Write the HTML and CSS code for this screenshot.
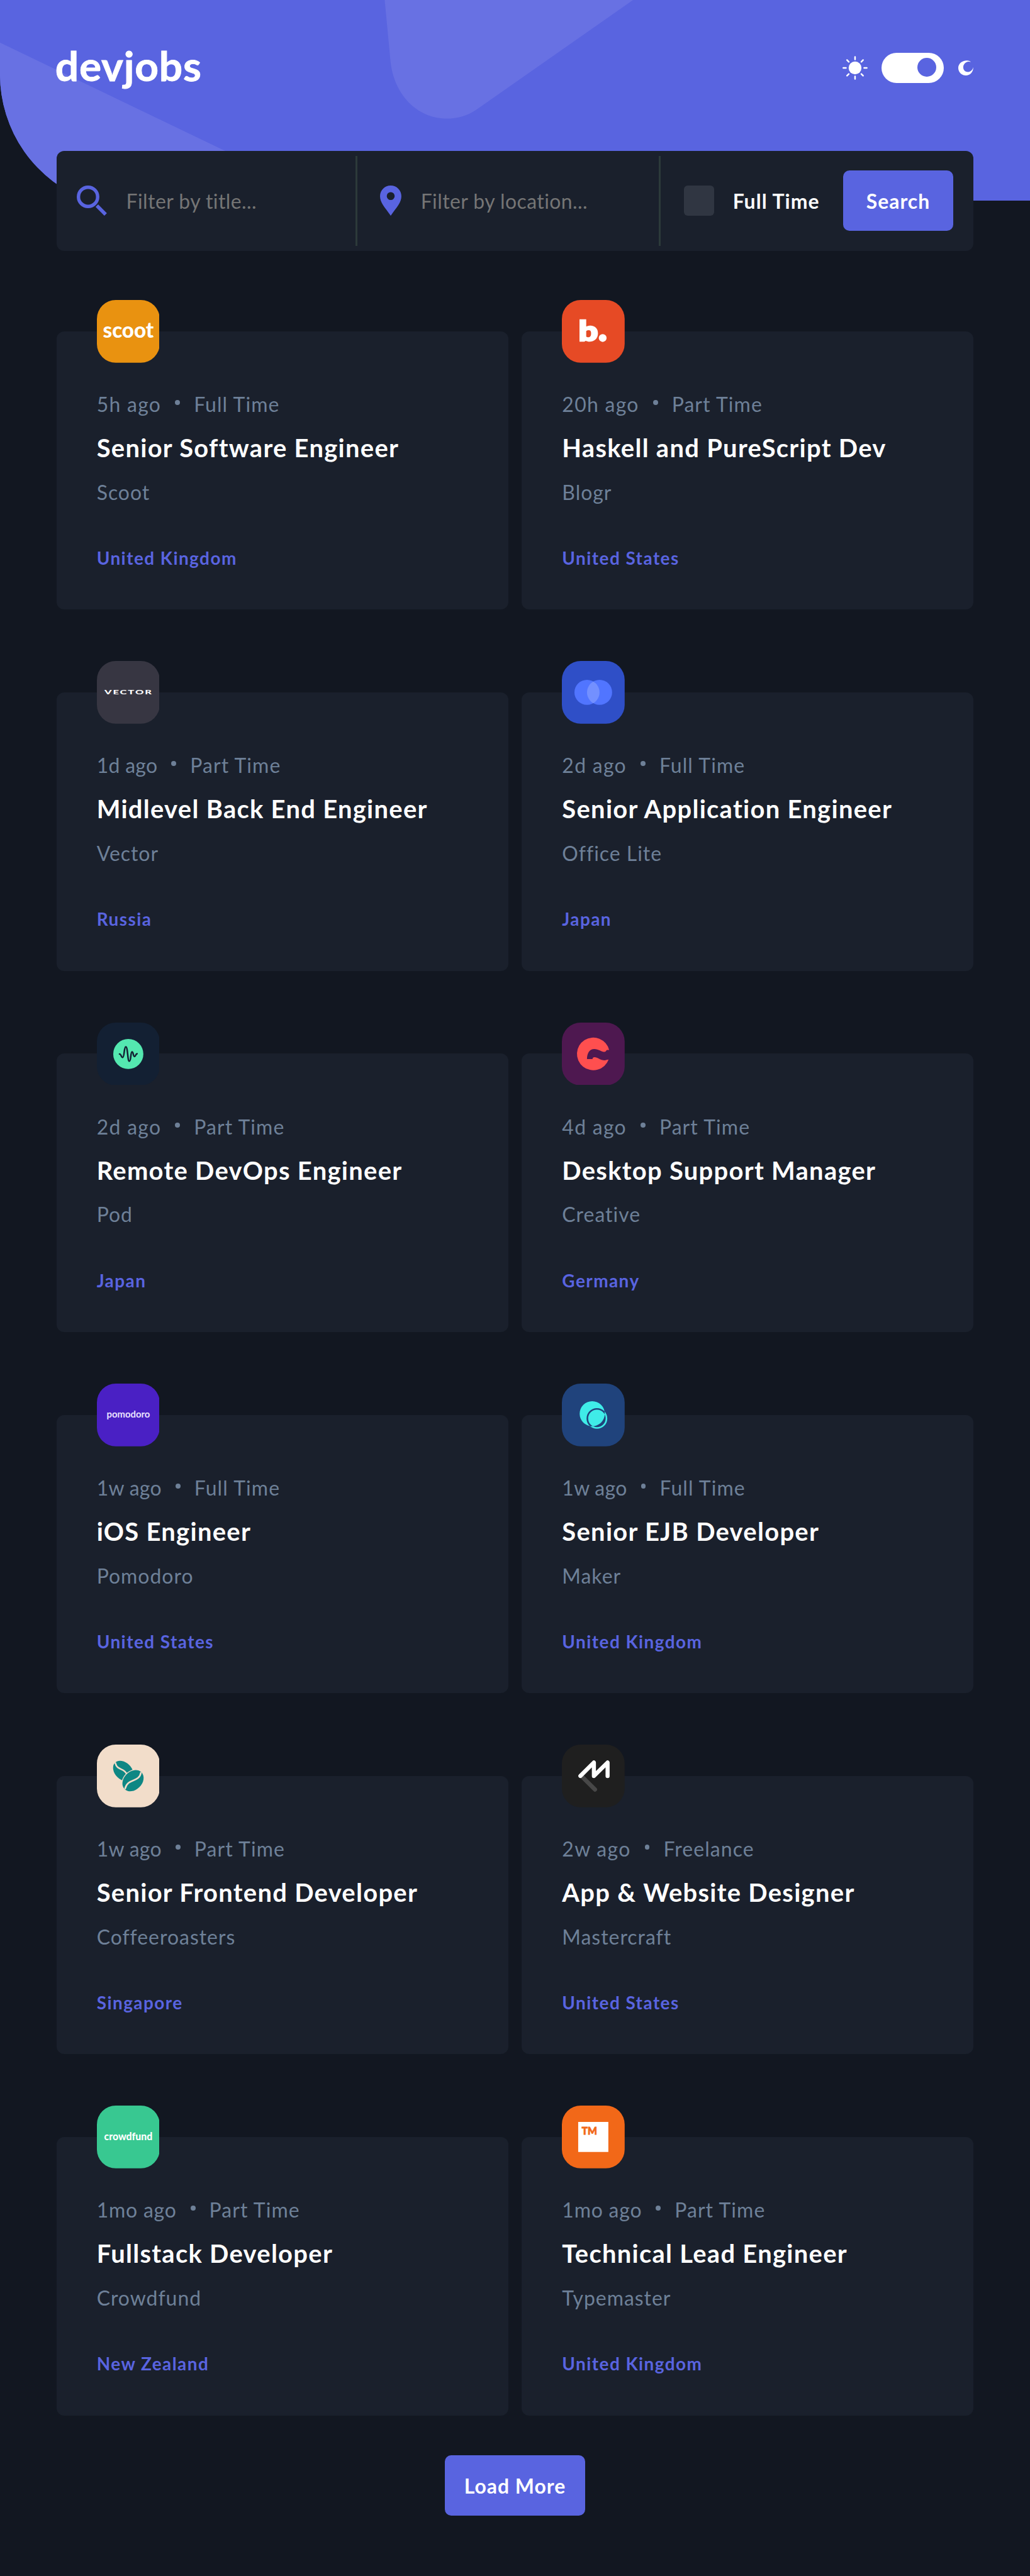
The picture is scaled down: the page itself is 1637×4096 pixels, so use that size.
FILE: index.html
```html
<!DOCTYPE html>
<html lang="en">
<head>
<meta charset="utf-8">
<title>devjobs</title>
<link rel="stylesheet" href="styles.css">
</head>
<body>
<div class="page">
  <header class="header">
    <svg class="header-bg" viewBox="0 0 1640 320" preserveAspectRatio="none" aria-hidden="true">
      <path fill="#5964e0" d="M0 0H1640V320H142A213.500 213.500 0 0 1 0 117.500Z"/>
      <path fill="#6871e3" d="M0 68L524 320H142A213.500 213.500 0 0 1 0 117.500Z"/>
      <path fill="#6871e3" d="M612.500 0L621.500 95C626 150 664 189 711 189C728 189 744 184.500 758 175L1008 0Z"/>
    </svg>
    <div class="topbar">
      <a class="brand">devjobs</a>
      <div class="theme">
        <svg class="sun" viewBox="0 0 40 40"><circle cx="20" cy="20" r="10.200" fill="#fff"/><path stroke="#fff" stroke-width="2.500" stroke-linecap="round" d="M20 2.500V6.500M20 33.500V37.500M1.300 20H5.500M34.500 20H38.700M7.200 7.500L10 10.300M30 29.700L32.800 32.500M32.800 7.500L30 10.300M10 29.700L7.200 32.500"/></svg>
        <span class="toggle"><span class="knob"></span></span>
        <svg class="moon" viewBox="0 0 24 24"><path fill="#fff" d="M13 .3C16 -.1 19 1.200 20.200 2.600C18 1.600 15 1.500 12.300 3.300C9 5.500 7.600 8.500 8 12C8.500 16 11.500 18.500 15.500 18.500C20 18.300 23 15 23.800 10.800C24.300 18 19 24 12 24C5.400 24 0 18.600 0 12C0 6 5 .8 13 .3Z"/></svg>
      </div>
    </div>
  </header>

  <form class="filters">
    <label class="field field-title">
      <svg class="icon-search" viewBox="0 0 48 48"><circle cx="18" cy="18" r="15.300" fill="none" stroke="#5964e0" stroke-width="5.400"/><path fill="#5964e0" d="M30 34L34 30L48 44L44 48Z"/></svg>
      <span class="placeholder">Filter by title...</span>
    </label>
    <label class="field field-location">
      <svg class="icon-pin" viewBox="0 0 34 48"><path fill="#5964e0" fill-rule="evenodd" d="M17 0C26.500 0 34 7.500 34 17C34 27 27 34 17 48C7 34 0 27 0 17C0 7.500 7.500 0 17 0ZM17 10.500A6.300 6.300 0 1 0 17 23.100A6.300 6.300 0 1 0 17 10.500Z"/></svg>
      <span class="placeholder">Filter by location...</span>
    </label>
    <div class="field-submit">
      <span class="checkbox"></span>
      <span class="check-label">Full Time</span>
      <button class="button button-search" type="button">Search</button>
    </div>
  </form>

  <main class="jobs">
    <article class="job">
      <svg class="job-logo" viewBox="0 0 100 100"><rect width="100" height="100" rx="30" fill="#e99210"/><text class="logo-text logo-scoot" x="9.500" y="60.500" textLength="81" lengthAdjust="spacingAndGlyphs">scoot</text></svg>
      <p class="meta"><span class="age">5h ago</span><i class="dot"></i><span>Full Time</span></p>
      <h2 class="title">Senior Software Engineer</h2>
      <p class="company">Scoot</p>
      <p class="location">United Kingdom</p>
    </article>
    <article class="job">
      <svg class="job-logo" viewBox="0 0 100 100"><rect width="100" height="100" rx="30" fill="#e64a25"/><text class="logo-text logo-blogr" x="26.500" y="65.500" textLength="31" lengthAdjust="spacingAndGlyphs">b</text><circle cx="65" cy="60.600" r="6.200" fill="#fff"/></svg>
      <p class="meta"><span class="age">20h ago</span><i class="dot"></i><span>Part Time</span></p>
      <h2 class="title">Haskell and PureScript Dev</h2>
      <p class="company">Blogr</p>
      <p class="location">United States</p>
    </article>
    <article class="job">
      <svg class="job-logo" viewBox="0 0 100 100"><rect width="100" height="100" rx="30" fill="#373642"/><text class="logo-text logo-vector" x="12" y="53" textLength="77" lengthAdjust="spacingAndGlyphs">VECTOR</text></svg>
      <p class="meta"><span class="age age-narrow">1d ago</span><i class="dot"></i><span>Part Time</span></p>
      <h2 class="title">Midlevel Back End Engineer</h2>
      <p class="company">Vector</p>
      <p class="location">Russia</p>
    </article>
    <article class="job">
      <svg class="job-logo" viewBox="0 0 100 100"><rect width="100" height="100" rx="30" fill="#2f4fc7"/><circle cx="40" cy="50" r="20" fill="#5175ff"/><circle cx="60" cy="50" r="20" fill="#5175ff"/><path fill="#7390ff" d="M50 32.700A20 20 0 0 1 50 67.300A20 20 0 0 1 50 32.700Z"/></svg>
      <p class="meta"><span class="age">2d ago</span><i class="dot"></i><span>Full Time</span></p>
      <h2 class="title">Senior Application Engineer</h2>
      <p class="company">Office Lite</p>
      <p class="location">Japan</p>
    </article>
    <article class="job">
      <svg class="job-logo" viewBox="0 0 100 100"><rect width="100" height="100" rx="30" fill="#132033"/><circle cx="50" cy="50" r="24" fill="#54e8b0"/><path fill="none" stroke="#132033" stroke-width="2.500" stroke-linecap="round" stroke-linejoin="round" d="M36 50C38.500 49.500 38.500 55.500 41 55.500C44 55.500 43 38.500 46 38.500C49.500 38.500 48.500 61.500 51.700 61.500C54.500 61.500 53.500 46.500 56 46.500C58.300 46.500 57.500 54 60 54C62 54 61.500 49.500 64 49.500"/></svg>
      <p class="meta"><span class="age">2d ago</span><i class="dot"></i><span>Part Time</span></p>
      <h2 class="title">Remote DevOps Engineer</h2>
      <p class="company">Pod</p>
      <p class="location">Japan</p>
    </article>
    <article class="job">
      <svg class="job-logo" viewBox="0 0 100 100"><rect width="100" height="100" rx="30" fill="#4e1850"/><path fill="#ff4f4f" d="M75.300 43.700H72C70.500 43.700 70.500 46.700 68 46.700C63.500 46.700 58 42 51.700 42C43.500 42 40 49.500 40 58.200H48.800C48.800 56 50 55 52 55C56.500 55 61.500 60 68 60C71 60 71.500 59 74.400 58.900A26 26 0 1 1 75.300 43.700Z"/></svg>
      <p class="meta"><span class="age">4d ago</span><i class="dot"></i><span>Part Time</span></p>
      <h2 class="title">Desktop Support Manager</h2>
      <p class="company">Creative</p>
      <p class="location">Germany</p>
    </article>
    <article class="job">
      <svg class="job-logo" viewBox="0 0 100 100"><rect width="100" height="100" rx="30" fill="#4a20c4"/><text class="logo-text logo-pomodoro" x="15.500" y="53.700" textLength="69" lengthAdjust="spacingAndGlyphs">pomodoro</text></svg>
      <p class="meta"><span class="age age-narrow">1w ago</span><i class="dot"></i><span>Full Time</span></p>
      <h2 class="title">iOS Engineer</h2>
      <p class="company">Pomodoro</p>
      <p class="location">United States</p>
    </article>
    <article class="job">
      <svg class="job-logo" viewBox="0 0 100 100"><rect width="100" height="100" rx="30" fill="#20437c"/><path fill="#3fece8" fill-rule="evenodd" d="M48.300 28A20 20 0 1 0 48.300 68A20 20 0 1 0 48.300 28ZM55.800 39A16.500 16.500 0 1 0 55.800 72A16.500 16.500 0 1 0 55.800 39ZM55.800 41.600A13.900 13.900 0 1 1 55.800 69.400A13.900 13.900 0 1 1 55.800 41.600Z"/></svg>
      <p class="meta"><span class="age age-narrow">1w ago</span><i class="dot"></i><span>Full Time</span></p>
      <h2 class="title">Senior EJB Developer</h2>
      <p class="company">Maker</p>
      <p class="location">United Kingdom</p>
    </article>
    <article class="job">
      <svg class="job-logo" viewBox="0 0 100 100"><rect width="100" height="100" rx="30" fill="#f2ddca"/><ellipse cx="42" cy="42" rx="18.500" ry="13.500" transform="rotate(45 42 42)" fill="#0e8784"/><path fill="none" stroke="#f2ddca" stroke-width="2.600" stroke-linecap="round" d="M29.500 29.500C32 41 42 37 47 46"/><ellipse cx="57.500" cy="57.500" rx="19" ry="14.500" transform="rotate(-45 57.500 57.500)" fill="#0e8784" stroke="#f2ddca" stroke-width="2.600" paint-order="stroke"/><path fill="none" stroke="#f2ddca" stroke-width="2.600" stroke-linecap="round" d="M70 45C67 61 49 53 45 70"/></svg>
      <p class="meta"><span class="age age-narrow">1w ago</span><i class="dot"></i><span>Part Time</span></p>
      <h2 class="title">Senior Frontend Developer</h2>
      <p class="company">Coffeeroasters</p>
      <p class="location">Singapore</p>
    </article>
    <article class="job">
      <svg class="job-logo" viewBox="0 0 100 100"><rect width="100" height="100" rx="30" fill="#1f1f1f"/><path stroke="#474747" stroke-width="6.800" stroke-linecap="round" d="M31 50L52.700 71.500"/><path fill="none" stroke="#fff" stroke-width="6.500" stroke-linecap="round" stroke-linejoin="round" d="M29.500 50L51 28.500V50L72.800 28.500V50"/></svg>
      <p class="meta"><span class="age">2w ago</span><i class="dot"></i><span>Freelance</span></p>
      <h2 class="title">App &amp; Website Designer</h2>
      <p class="company">Mastercraft</p>
      <p class="location">United States</p>
    </article>
    <article class="job">
      <svg class="job-logo" viewBox="0 0 100 100"><rect width="100" height="100" rx="30" fill="#38c891"/><text class="logo-text logo-crowdfund" x="11.500" y="55.300" textLength="77" lengthAdjust="spacingAndGlyphs">crowdfund</text></svg>
      <p class="meta"><span class="age age-month">1mo ago</span><i class="dot"></i><span>Part Time</span></p>
      <h2 class="title">Fullstack Developer</h2>
      <p class="company">Crowdfund</p>
      <p class="location">New Zealand</p>
    </article>
    <article class="job">
      <svg class="job-logo" viewBox="0 0 100 100"><rect width="100" height="100" rx="30" fill="#f26818"/><path fill="#fff" d="M26 26H74V74H26Z"/><text class="logo-text logo-typemaster" x="31.500" y="46" textLength="24.500" lengthAdjust="spacingAndGlyphs">TM</text></svg>
      <p class="meta"><span class="age age-month">1mo ago</span><i class="dot"></i><span>Part Time</span></p>
      <h2 class="title">Technical Lead Engineer</h2>
      <p class="company">Typemaster</p>
      <p class="location">United Kingdom</p>
    </article>
  </main>

  <div class="more">
    <button class="button button-more" type="button">Load More</button>
  </div>
</div>
</body>
</html>
```
FILE: styles.css
```css
* { box-sizing: border-box; }

html, body {
  margin: 0;
  height: 4096px;
  overflow: hidden;
  background: #121721;
}

.page {
  zoom: 0.998;
  width: 1640.3px;
  height: 4104px;
  color: #fff;
  font-family: Lato, "Liberation Sans", sans-serif;
  font-size: 32px;
}

.header {
  position: relative;
  height: 240px;
}

.header-bg {
  position: absolute;
  top: 0;
  left: 0;
  width: 100%;
  height: 320px;
}

.topbar {
  position: relative;
  display: flex;
  justify-content: space-between;
  align-items: flex-start;
  padding: 64px 90px 0;
}

.brand {
  margin-left: -2px;
  font-size: 66px;
  font-weight: 700;
  line-height: 80px;
  letter-spacing: 0.8px;
  -webkit-text-stroke: 0.8px #fff;
}

.theme {
  display: flex;
  align-items: center;
  height: 48px;
  margin-top: 20px;
}

.sun { width: 40px; height: 40px; }

.toggle {
  display: flex;
  align-items: center;
  justify-content: flex-end;
  width: 100px;
  height: 48px;
  margin: 0 23px 0 22px;
  padding: 0 12px 2px 0;
  border-radius: 24px;
  background: #fff;
}

.knob {
  width: 30px;
  height: 30px;
  border-radius: 50%;
  background: #5964e0;
}

.moon { width: 24px; height: 24px; }

.filters {
  position: relative;
  display: flex;
  align-items: center;
  height: 160px;
  margin: 0 90px;
  border-radius: 12px;
  background: #1a202c;
}

.field {
  display: flex;
  align-items: center;
  height: 144px;
  border-right: 4px solid #2c3a3a;
}

.field-title {
  width: 479px;
  padding-left: 32px;
  gap: 31px;
}

.field-location {
  width: 483px;
  padding-left: 36px;
  gap: 31px;
}

.icon-search { width: 48px; height: 48px; }
.icon-pin { width: 34px; height: 48px; }

.placeholder {
  padding-top: 2px;
  color: #757575;
  line-height: 40px;
  letter-spacing: 0.45px;
  white-space: nowrap;
}

.field-submit {
  flex: 1;
  display: flex;
  align-items: center;
  padding: 0 32px 0 37px;
}

.checkbox {
  width: 48px;
  height: 48px;
  border-radius: 6px;
  background: #303642;
}

.check-label {
  margin-left: 30px;
  padding-top: 1px;
  font-weight: 700;
  line-height: 40px;
  letter-spacing: 1.05px;
  white-space: nowrap;
}

.button {
  height: 96px;
  padding: 1px 0 0;
  border: 0;
  border-radius: 10px;
  background: #5964e0;
  color: #fff;
  font: 700 32px/40px Lato, "Liberation Sans", sans-serif;
  letter-spacing: 1px;
}

.button-search { width: 176px; margin-left: auto; }
.button-more { width: 224px; }

.jobs {
  display: grid;
  grid-template-columns: 1fr 1fr;
  grid-auto-rows: 443.4px;
  gap: 132px 22px;
  padding: 128px 90px 0;
}

.job {
  position: relative;
  padding: 96.5px 64px 0;
  border-radius: 12px;
  background: #1a202c;
}

.job-logo {
  position: absolute;
  top: -50px;
  left: 64px;
  width: 100px;
  height: 100px;
}

.meta, .title, .company, .location {
  margin: 0;
  white-space: nowrap;
}

.meta {
  display: flex;
  align-items: center;
  color: #6e8098;
  line-height: 40px;
  letter-spacing: 1.1px;
}

.age { letter-spacing: 1.3px; }
.age-narrow { letter-spacing: 0.3px; }
.age-month { letter-spacing: 0.8px; }

.dot {
  width: 8px;
  height: 8px;
  margin: 0 22px 6px;
  border-radius: 50%;
  background: #6e8098;
}

.title {
  margin-top: 25px;
  font-size: 40px;
  font-weight: 700;
  line-height: 50px;
  letter-spacing: 1.3px;
}

.company {
  margin-top: 25px;
  color: #6e8098;
  line-height: 40px;
  letter-spacing: 1px;
}

.location {
  margin-top: 68.4px;
  color: #5964e0;
  font-size: 28px;
  font-weight: 700;
  line-height: 34px;
  letter-spacing: 1.45px;
}

.logo-text {
  fill: #fff;
  font-family: Lato, "Liberation Sans", sans-serif;
  font-weight: 700;
}

.logo-scoot { font-size: 34px; font-weight: 900; }
.logo-blogr { font-size: 43px; font-weight: 900; stroke: #fff; stroke-width: 2.5px; }
.logo-vector { font-size: 8.6px; font-weight: 900; letter-spacing: 1px; }
.logo-pomodoro { font-size: 15.5px; fill: #e9e0ff; }
.logo-crowdfund { font-size: 16.5px; font-weight: 900; }
.logo-typemaster { font-size: 17px; font-weight: 900; fill: #f26818; stroke: #f26818; stroke-width: 0.8px; }

.more {
  display: flex;
  justify-content: center;
  padding-top: 64px;
}
```
